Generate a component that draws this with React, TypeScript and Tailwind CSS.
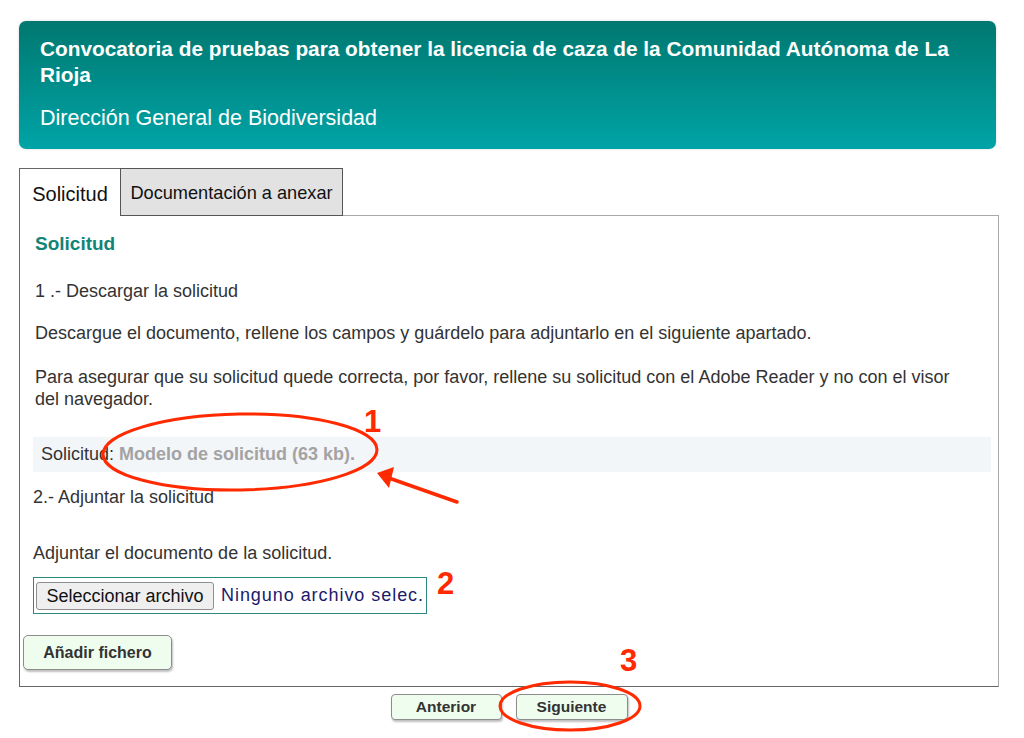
import React from "react";

export default function App() {
  return (
    <div className="relative w-[1024px] h-[738px] overflow-hidden bg-white font-['Liberation_Sans',Arial,sans-serif] text-[#333]">
      {/* Header */}
      <div className="ml-[19px] mt-[21px] w-[977px] h-[128px] rounded-[7px] bg-gradient-to-b from-[#007870] to-[#00a4a7] shadow-[0_0_3px_rgba(0,0,0,0.15)] px-[21px] pt-[15px]">
        <h1 className="text-white font-bold text-[20.8px] leading-[26px] pr-[10px]">
          Convocatoria de pruebas para obtener la licencia de caza de la Comunidad Autónoma de La Rioja
        </h1>
        <p className="text-white text-[21.5px] leading-[26px] mt-[17px]">Dirección General de Biodiversidad</p>
      </div>

      {/* Tabs */}
      <div className="ml-[19px] mt-[19px] w-[980px]">
        <div className="flex h-[48px]">
          <div className="w-[101px] border-l border-t border-[#666] bg-white flex items-center justify-center pt-[3px] text-[20px] text-[#111]">
            Solicitud
          </div>
          <div className="w-[223px] border border-[#555] bg-[#e2e2e2] flex items-center justify-center pt-[3px] text-[18.2px] text-[#111]">
            Documentación a anexar
          </div>
          <div className="flex-1 border-b border-[#aaa]"></div>
        </div>

        {/* Panel */}
        <div className="border-l border-b border-r border-l-[#666] border-b-[#666] border-r-[#aaa] px-[3px] pt-[16px] pb-[16px]">
          <h2 className="ml-[12px] text-[19px] leading-[24px] font-bold text-[#118477]">Solicitud</h2>
          <p className="ml-[12px] mt-[24px] text-[18px] leading-[22px]">1 .- Descargar la solicitud</p>
          <p className="ml-[12px] mt-[20px] text-[18px] leading-[22px]">
            Descargue el documento, rellene los campos y guárdelo para adjuntarlo en el siguiente apartado.
          </p>
          <p className="ml-[12px] mt-[22px] text-[18px] leading-[22px] pr-[20px]">
            Para asegurar que su solicitud quede correcta, por favor, rellene su solicitud con el Adobe Reader y no con el visor del navegador.
          </p>
          <div className="ml-[10px] mt-[27px] w-[958px] h-[35px] bg-[#f3f6f9] flex items-center pl-[8px] text-[18px]">
            <span>Solicitud:&nbsp;</span>
            <span className="font-bold text-[#a3a3a3]">Modelo de solicitud (63 kb).</span>
          </div>
          <p className="ml-[10px] mt-[14px] text-[18px] leading-[22px]">2.- Adjuntar la solicitud</p>
          <p className="ml-[10px] mt-[34px] text-[18px] leading-[22px]">Adjuntar el documento de la solicitud.</p>
          <div className="ml-[10px] mt-[13px] w-[394px] h-[37px] border border-[#2b8a80] flex items-center pl-[2px]">
            <button className="h-[28px] w-[178px] rounded-[3px] border border-[#8f8f8f] bg-[#efefef] text-[18px] text-[#111] leading-none">
              Seleccionar archivo
            </button>
            <span className="ml-[7px] text-[18px] tracking-[0.95px] text-[#1b1b6b]">Ninguno archivo selec.</span>
          </div>
          <button className="mt-[21px] w-[149px] h-[35px] rounded-[5px] border border-[#8c8c8c] bg-[#effdef] shadow-[1px_2px_2px_rgba(0,0,0,0.25)] text-[16px] font-bold text-[#333]">
            Añadir fichero
          </button>
        </div>

        {/* Bottom buttons */}
        <div className="flex justify-center gap-[14px] mt-[7px]">
          <button className="w-[111px] h-[26px] rounded-[4px] border border-[#8c8c8c] bg-[#effdef] shadow-[1px_2px_2px_rgba(0,0,0,0.25)] text-[15.5px] font-bold text-[#333] leading-none">
            Anterior
          </button>
          <button className="w-[112px] h-[26px] rounded-[4px] border border-[#8c8c8c] bg-[#effdef] shadow-[1px_2px_2px_rgba(0,0,0,0.25)] text-[15.5px] font-bold text-[#333] leading-none">
            Siguiente
          </button>
        </div>
      </div>

      {/* Annotations overlay */}
      <svg className="absolute left-0 top-0 pointer-events-none" width="1024" height="738" viewBox="0 0 1024 738">
        <ellipse cx="240" cy="452" rx="137" ry="38" fill="none" stroke="#ff2a00" strokeWidth="3" transform="rotate(-1 240 452)" />
        <line x1="457" y1="502" x2="386" y2="477" stroke="#ff2a00" strokeWidth="3.5" strokeLinecap="round" />
        <polygon points="377,473 394,467 389,488" fill="#ff2a00" />
        <ellipse cx="570" cy="706" rx="70" ry="24" fill="none" stroke="#ff2a00" strokeWidth="3" />
      </svg>
      <span className="absolute left-[364px] top-[411px] text-[31px] leading-[22px] font-bold text-[#ff2a00]">1</span>
      <span className="absolute left-[437px] top-[568px] text-[31px] leading-none font-bold text-[#ff2a00]">2</span>
      <span className="absolute left-[620px] top-[645px] text-[31px] leading-none font-bold text-[#ff2a00]">3</span>
    </div>
  );
}
